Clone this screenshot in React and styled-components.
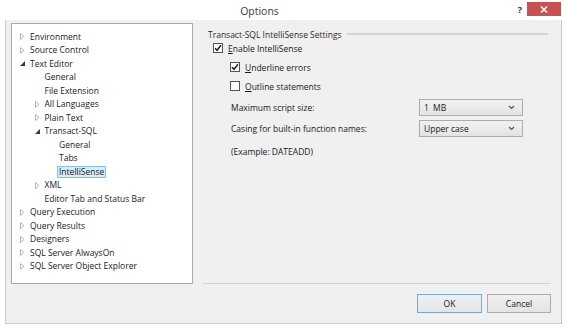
import styled, { createGlobalStyle } from 'styled-components'

const GlobalStyle = createGlobalStyle`
    html, body {
        margin: 0;
        padding: 0;
        background: #ffffff;
    }
    body {
        font-family: "Open Sans", "Noto Sans", sans-serif;
        font-size: 8.5px;
        color: #1a1a1a;
    }
`

const treeItems = [
    { label: 'Environment', level: 0, arrow: 'closed' },
    { label: 'Source Control', level: 0, arrow: 'closed' },
    { label: 'Text Editor', level: 0, arrow: 'open' },
    { label: 'General', level: 1 },
    { label: 'File Extension', level: 1 },
    { label: 'All Languages', level: 1, arrow: 'closed' },
    { label: 'Plain Text', level: 1, arrow: 'closed' },
    { label: 'Transact-SQL', level: 1, arrow: 'open' },
    { label: 'General', level: 2 },
    { label: 'Tabs', level: 2 },
    { label: 'IntelliSense', level: 2, selected: true },
    { label: 'XML', level: 1, arrow: 'closed' },
    { label: 'Editor Tab and Status Bar', level: 1 },
    { label: 'Query Execution', level: 0, arrow: 'closed' },
    { label: 'Query Results', level: 0, arrow: 'closed' },
    { label: 'Designers', level: 0, arrow: 'closed' },
    { label: 'SQL Server AlwaysOn', level: 0, arrow: 'closed' },
    { label: 'SQL Server Object Explorer', level: 0, arrow: 'closed' },
]

// icons
const Arrow = ({ type }) => {
    if (type === 'open') {
        return (
            <svg width="5" height="5" viewBox="0 0 5 5">
                <path d="M5 0 L5 5 L0 5 Z" fill="#3a3a3a" />
            </svg>
        )
    }
    if (type === 'closed') {
        return (
            <svg width="5" height="7" viewBox="0 0 5 7">
                <path d="M0.5 0.5 L4 3.5 L0.5 6.5 Z" fill="none" stroke="#b4b4b4" strokeWidth="1" />
            </svg>
        )
    }
    return null
}

const Check = () => (
    <svg width="8" height="8" viewBox="0 0 8 8">
        <path d="M1 4.2 L3 6.3 L7 1.3" fill="none" stroke="#222" strokeWidth="1.5" />
    </svg>
)

const Chevron = () => (
    <svg width="7" height="5" viewBox="0 0 7 5">
        <path d="M1 1 L3.5 3.5 L6 1" fill="none" stroke="#555" strokeWidth="1.2" />
    </svg>
)

// subComponents
const TreeRow = ({ item }) => (
    <Row $level={item.level}>
        <ArrowSlot><Arrow type={item.arrow} /></ArrowSlot>
        <Label $selected={item.selected}>{item.label}</Label>
    </Row>
)

const CheckOption = ({ checked, accel, rest, $indent }) => (
    <OptionRow $indent={$indent}>
        <Box>{checked && <Check />}</Box>
        <span><u>{accel}</u>{rest}</span>
    </OptionRow>
)

const Dropdown = ({ value }) => (
    <Select>
        <span>{value}</span>
        <Chevron />
    </Select>
)

//mainComponent
const App = () => {
    return (
        <>
            <GlobalStyle />
            <Window>
                <TitleBar>
                    <Title>Options</Title>
                    <Help>?</Help>
                    <Close>
                        <svg width="8" height="7" viewBox="0 0 8 7">
                            <path d="M1 0.5 L7 6.5 M7 0.5 L1 6.5" stroke="#fff" strokeWidth="1.6" />
                        </svg>
                    </Close>
                </TitleBar>
                <Content>
                    <Main>
                        <Tree>
                            {treeItems.map((item, index) => (
                                <TreeRow key={index} item={item} />
                            ))}
                        </Tree>
                        <Panel>
                            <GroupHeader>
                                <span>Transact-SQL IntelliSense Settings</span>
                                <HeaderLine />
                            </GroupHeader>
                            <CheckOption checked accel="E" rest="nable IntelliSense" $indent={10} />
                            <CheckOption checked accel="U" rest="nderline errors" $indent={27} />
                            <CheckOption accel="O" rest="utline statements" $indent={27} />
                            <FieldRow $top={6}>
                                <FieldLabel>Maximum script size:</FieldLabel>
                                <Dropdown value={'1\u2002MB'} />
                            </FieldRow>
                            <FieldRow $top={4}>
                                <FieldLabel>Casing for built-in function names:</FieldLabel>
                                <Dropdown value="Upper case" />
                            </FieldRow>
                            <Note>(Example: DATEADD)</Note>
                        </Panel>
                    </Main>
                    <Footer>
                        <Button $default>OK</Button>
                        <Button>Cancel</Button>
                    </Footer>
                </Content>
            </Window>
        </>
    )
}

export default App

//styles
const Window = styled.div`
    width: 566px;
    height: 330px;
    background: #ffffff;
    display: flex;
    flex-direction: column;
    padding: 0 4px 6px 5px;
    box-sizing: border-box;
`
const TitleBar = styled.div`
    height: 21px;
    position: relative;
    display: flex;
    align-items: center;
    justify-content: center;
    padding-right: 48px;
`
const Title = styled.div`
    font-size: 10.5px;
    color: #3c3c3c;
    margin-top: 2px;
`
const Help = styled.div`
    position: absolute;
    right: 40px;
    top: 3px;
    font-weight: 700;
    font-size: 9px;
    color: #333;
`
const Close = styled.div`
    position: absolute;
    right: 1px;
    top: 2px;
    width: 34px;
    height: 14px;
    background: #c75050;
    display: flex;
    align-items: center;
    justify-content: center;
`
const Content = styled.div`
    flex: 1;
    background: #f0f0f0;
    border: 1px solid #cacaca;
    border-top: none;
    display: flex;
    flex-direction: column;
    padding: 3px 10px 10px 5px;
`
const Main = styled.div`
    display: flex;
    gap: 10px;
    height: 261px;
`
const Tree = styled.div`
    width: 182px;
    box-sizing: border-box;
    background: #ffffff;
    border: 1px solid #a9a9a9;
    padding-top: 6px;
    display: flex;
    flex-direction: column;
`
const Row = styled.div`
    height: 13.5px;
    display: flex;
    align-items: center;
    padding-left: ${p => 5 + p.$level * 14.5}px;
    white-space: nowrap;
`
const ArrowSlot = styled.div`
    width: 11px;
    display: flex;
    align-items: center;
    justify-content: center;
`
const Label = styled.span`
    line-height: 10px;
    padding: 0 1px;
    border: 1px solid ${p => (p.$selected ? '#86c0ec' : 'transparent')};
    background: ${p => (p.$selected ? '#d8ebf9' : 'transparent')};
`
const Panel = styled.div`
    flex: 1;
    border-bottom: 1px solid #d3d3d3;
    padding: 5px 3px 0 5px;
    display: flex;
    flex-direction: column;
`
const GroupHeader = styled.div`
    height: 12px;
    display: flex;
    align-items: center;
    color: #2c2c2c;
`
const HeaderLine = styled.div`
    flex: 1;
    height: 2px;
    margin-left: 5px;
    background: #d4d4d4;
`
const OptionRow = styled.div`
    height: 14px;
    margin-top: 5px;
    margin-left: ${p => p.$indent - 5}px;
    display: flex;
    align-items: center;
    gap: 4px;

    &:nth-child(2) {
        margin-top: 1px;
    }

    u {
        text-underline-offset: 1px;
    }
`
const Box = styled.div`
    width: 8px;
    height: 8px;
    border: 1px solid #555;
    background: #fff;
    display: flex;
    align-items: center;
    justify-content: center;
    margin-right: 1px;
`
const FieldRow = styled.div`
    margin-top: ${p => p.$top}px;
    margin-left: 23px;
    height: 17px;
    display: flex;
    align-items: center;
`
const FieldLabel = styled.div`
    width: 188px;
`
const Select = styled.div`
    width: 104px;
    height: 17px;
    box-sizing: border-box;
    border: 1px solid #acacac;
    background: linear-gradient(#f2f2f2, #e3e3e3);
    display: flex;
    align-items: center;
    justify-content: space-between;
    padding: 0 7px 0 4px;
`
const Note = styled.div`
    margin-top: 7px;
    margin-left: 23px;
    height: 14px;
    display: flex;
    align-items: center;
`
const Footer = styled.div`
    margin-top: 10px;
    display: flex;
    justify-content: flex-end;
    gap: 5px;
`
const Button = styled.div`
    width: ${p => (p.$default ? 65 : 64)}px;
    height: 19px;
    box-sizing: border-box;
    border: 1px solid ${p => (p.$default ? '#7aa9d8' : '#acacac')};
    background: linear-gradient(#f0f0f0, #e4e4e4);
    display: flex;
    align-items: center;
    justify-content: center;
`
